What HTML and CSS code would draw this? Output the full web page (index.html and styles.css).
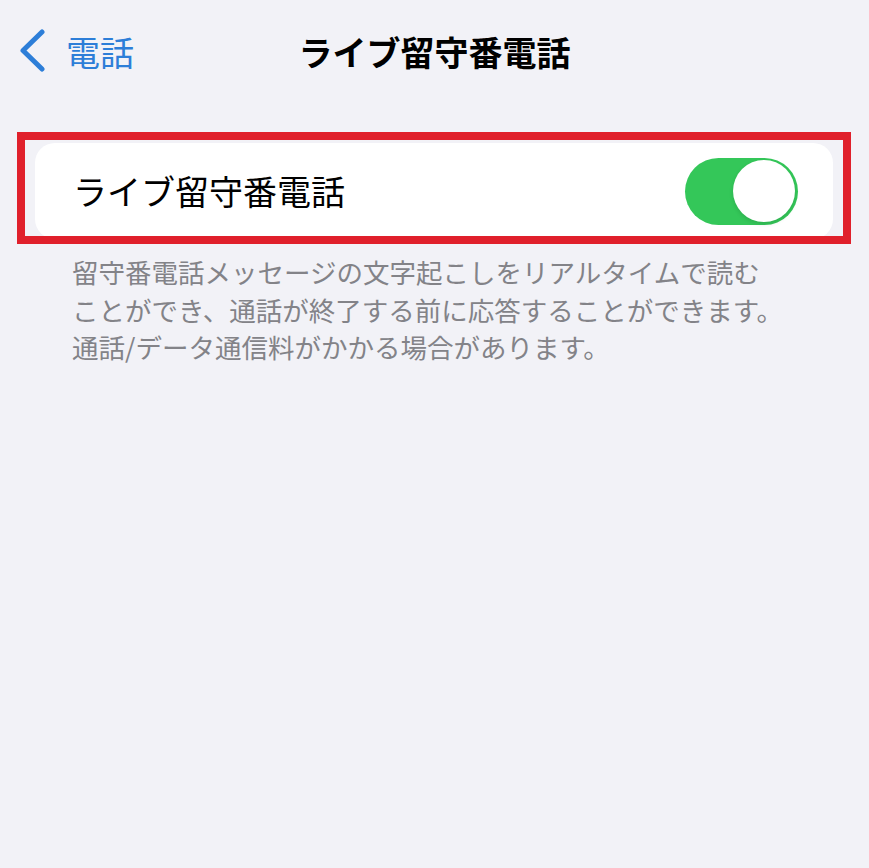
FILE: index.html
```html
<!DOCTYPE html>
<html lang="ja">

<head>
    <meta charset="UTF-8">
    <meta name="viewport" content="width=device-width, initial-scale=1.0">
    <title>ライブ留守番電話</title>
    <link rel="stylesheet" href="styles.css">
</head>

<body>
    <header class="nav-bar">
        <a class="back" href="#">
            <svg class="back-icon" width="30" height="46" viewBox="0 0 30 46">
                <path d="M24 3 L5 21.5 L24 40" fill="none" stroke="currentColor" stroke-width="5"
                    stroke-linecap="round" stroke-linejoin="round" />
            </svg>
            <span class="back-label">電話</span>
        </a>
        <h1 class="nav-title">ライブ留守番電話</h1>
        <div class="nav-spacer"></div>
    </header>

    <!-- 赤枠で囲まれた設定セル -->
    <div class="highlight">
        <div class="cell">
            <span class="cell-label">ライブ留守番電話</span>
            <span class="switch is-on"><span class="switch-knob"></span></span>
        </div>
    </div>

    <p class="footnote">
        留守番電話メッセージの文字起こしをリアルタイムで読む<br>
        ことができ、通話が終了する前に応答することができます。<br>
        通話/データ通信料がかかる場合があります。
    </p>
</body>

</html>
```

FILE: styles.css
```css
html {
    box-sizing: border-box;
}

*,
*::before,
*::after {
    box-sizing: inherit;
}

body {
    margin: 0;
    background-color: #f2f2f7;
    font-family: "Noto Sans CJK JP", "Noto Sans", sans-serif;
    color: #000;
}

.nav-bar {
    display: grid;
    grid-template-columns: 1fr auto 1fr;
    align-items: center;
    height: 104px;
    padding-left: 18px;
}

.back {
    display: flex;
    align-items: center;
    gap: 18px;
    color: #2d7ed8;
    text-decoration: none;
}

.back-icon {
    display: block;
}

.back-label {
    font-size: 34px;
    line-height: 40px;
}

.nav-title {
    margin: 0;
    font-size: 34px;
    line-height: 40px;
    font-weight: 700;
    padding-right: 18px;
}

.highlight {
    margin: 28px 18px 0 17px;
    border: 8px solid #e0202b;
    padding: 3px 10px 0;
    height: 112px;
    overflow: hidden;
}

.cell {
    display: flex;
    align-items: center;
    justify-content: space-between;
    height: 96px;
    padding: 0 35px 0 38px;
    background-color: #fff;
    border-radius: 20px;
}

.cell-label {
    font-size: 34px;
    line-height: 40px;
}

.switch {
    display: flex;
    align-items: center;
    width: 113px;
    height: 67px;
    padding: 0 3px;
    border-radius: 34px;
    background-color: #e5e5ea;
}

.switch.is-on {
    justify-content: flex-end;
    background-color: #34c759;
}

.switch-knob {
    width: 62px;
    height: 62px;
    border-radius: 50%;
    background-color: #fff;
    box-shadow: 0 2px 4px rgba(0, 0, 0, .12);
}

.footnote {
    margin: 9px 0 0 72px;
    font-size: 26.5px;
    line-height: 37.5px;
    color: #838388;
}
```
